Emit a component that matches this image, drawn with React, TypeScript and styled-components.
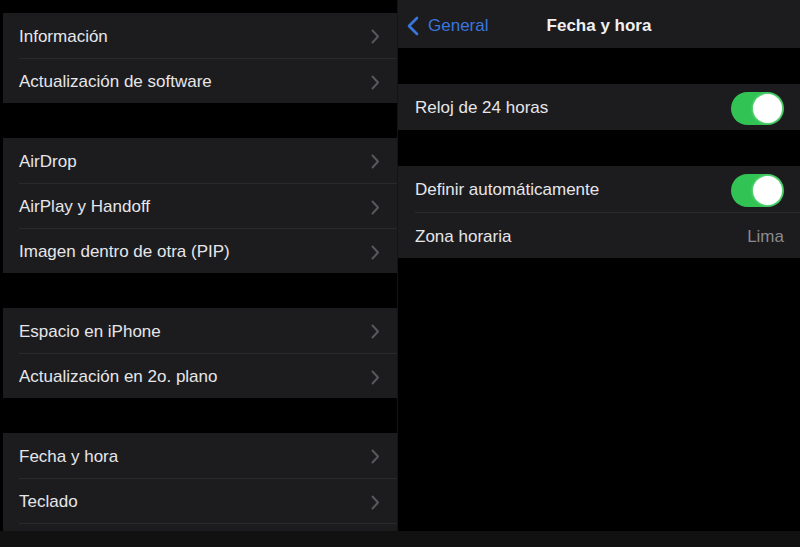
import React from "react";
import styled, { createGlobalStyle } from "styled-components";

const GlobalStyle = createGlobalStyle`
  html, body {
    margin: 0;
    padding: 0;
    background: #000;
  }
  body {
    font-family: "Liberation Sans", Arial, sans-serif;
    -webkit-font-smoothing: antialiased;
  }
`;

const leftGroups = [
  ["Información", "Actualización de software"],
  ["AirDrop", "AirPlay y Handoff", "Imagen dentro de otra (PIP)"],
  ["Espacio en iPhone", "Actualización en 2o. plano"],
  ["Fecha y hora", "Teclado", ""],
];

const Chevron = () => (
  <svg width="9" height="15" viewBox="0 0 9 15" fill="none">
    <path d="M1.5 1.5L7 7.5L1.5 13.5" stroke="#58585c" strokeWidth="2" strokeLinecap="round" strokeLinejoin="round" />
  </svg>
);

const BackChevron = () => (
  <svg width="12" height="20" viewBox="0 0 12 20" fill="none">
    <path d="M10 2L2 10L10 18" stroke="#3a76dc" strokeWidth="2.6" strokeLinecap="round" strokeLinejoin="round" />
  </svg>
);

const App = () => {
  return (
    <Page>
      <GlobalStyle />
      <Main>
        <LeftPane>
          {leftGroups.map((group, gi) => (
            <Group key={gi}>
              {group.map((label, i) => (
                <Row key={i}>
                  {label && (
                    <>
                      <Label>{label}</Label>
                      <Chevron />
                    </>
                  )}
                </Row>
              ))}
            </Group>
          ))}
        </LeftPane>
        <RightPane>
          <NavBar>
            <BackButton>
              <BackChevron />
              <span>General</span>
            </BackButton>
            <Title>Fecha y hora</Title>
          </NavBar>
          <Group>
            <Row $right>
              <Label>Reloj de 24 horas</Label>
              <Toggle />
            </Row>
          </Group>
          <Group>
            <Row $right>
              <Label>Definir automáticamente</Label>
              <Toggle />
            </Row>
            <Row $right>
              <Label>Zona horaria</Label>
              <Value>Lima</Value>
            </Row>
          </Group>
        </RightPane>
      </Main>
      <BottomStrip />
    </Page>
  );
};

export default App;

const Page = styled.div`
  width: 800px;
  height: 547px;
  display: flex;
  flex-direction: column;
  background: #000;
  overflow: hidden;
`;

const Main = styled.div`
  height: 531px;
  display: flex;
`;

const LeftPane = styled.div`
  width: 394px;
  margin-left: 3px;
  padding-top: 13px;
  display: flex;
  flex-direction: column;
  gap: 35px;
  overflow: hidden;
  border-right: 1px solid #141416;
`;

const RightPane = styled.div`
  flex: 1;
  display: flex;
  flex-direction: column;
  gap: 36px;
`;

const Group = styled.div`
  background: #1c1c1e;
  display: flex;
  flex-direction: column;
  flex-shrink: 0;
`;

const Row = styled.div<{ $right?: boolean }>`
  height: ${(p) => (p.$right ? "46px" : "45px")};
  margin-left: ${(p) => (p.$right ? "17px" : "16px")};
  padding-right: ${(p) => (p.$right ? "16px" : "17px")};
  padding-top: 2px;
  display: flex;
  align-items: center;
  justify-content: space-between;
  box-sizing: border-box;
  flex-shrink: 0;
  & + & {
    border-top: 1px solid #2a2a2d;
  }
`;

const Label = styled.span`
  color: #e6e6ea;
  font-size: 17px;
`;

const Value = styled.span`
  color: #8a8a8f;
  font-size: 17px;
`;

const NavBar = styled.div`
  height: 48px;
  padding-top: 4px;
  box-sizing: border-box;
  background: #1c1c1e;
  position: relative;
  display: flex;
  align-items: center;
  justify-content: center;
  flex-shrink: 0;
`;

const BackButton = styled.div`
  position: absolute;
  left: 9px;
  top: 4px;
  bottom: 0;
  display: flex;
  align-items: center;
  gap: 9px;
  color: #3a76dc;
  font-size: 17px;
`;

const Title = styled.span`
  color: #f0f0f2;
  font-size: 17px;
  font-weight: 700;
`;

const Toggle = styled.span`
  width: 53px;
  height: 33px;
  border-radius: 17px;
  background: #31c454;
  position: relative;
  flex-shrink: 0;
  &::after {
    content: "";
    position: absolute;
    top: 2px;
    right: 2px;
    width: 29px;
    height: 29px;
    border-radius: 50%;
    background: #fff;
    box-shadow: 0 0 3px rgba(255, 255, 255, 0.6);
  }
`;

const BottomStrip = styled.div`
  height: 16px;
  background: #111112;
`;
